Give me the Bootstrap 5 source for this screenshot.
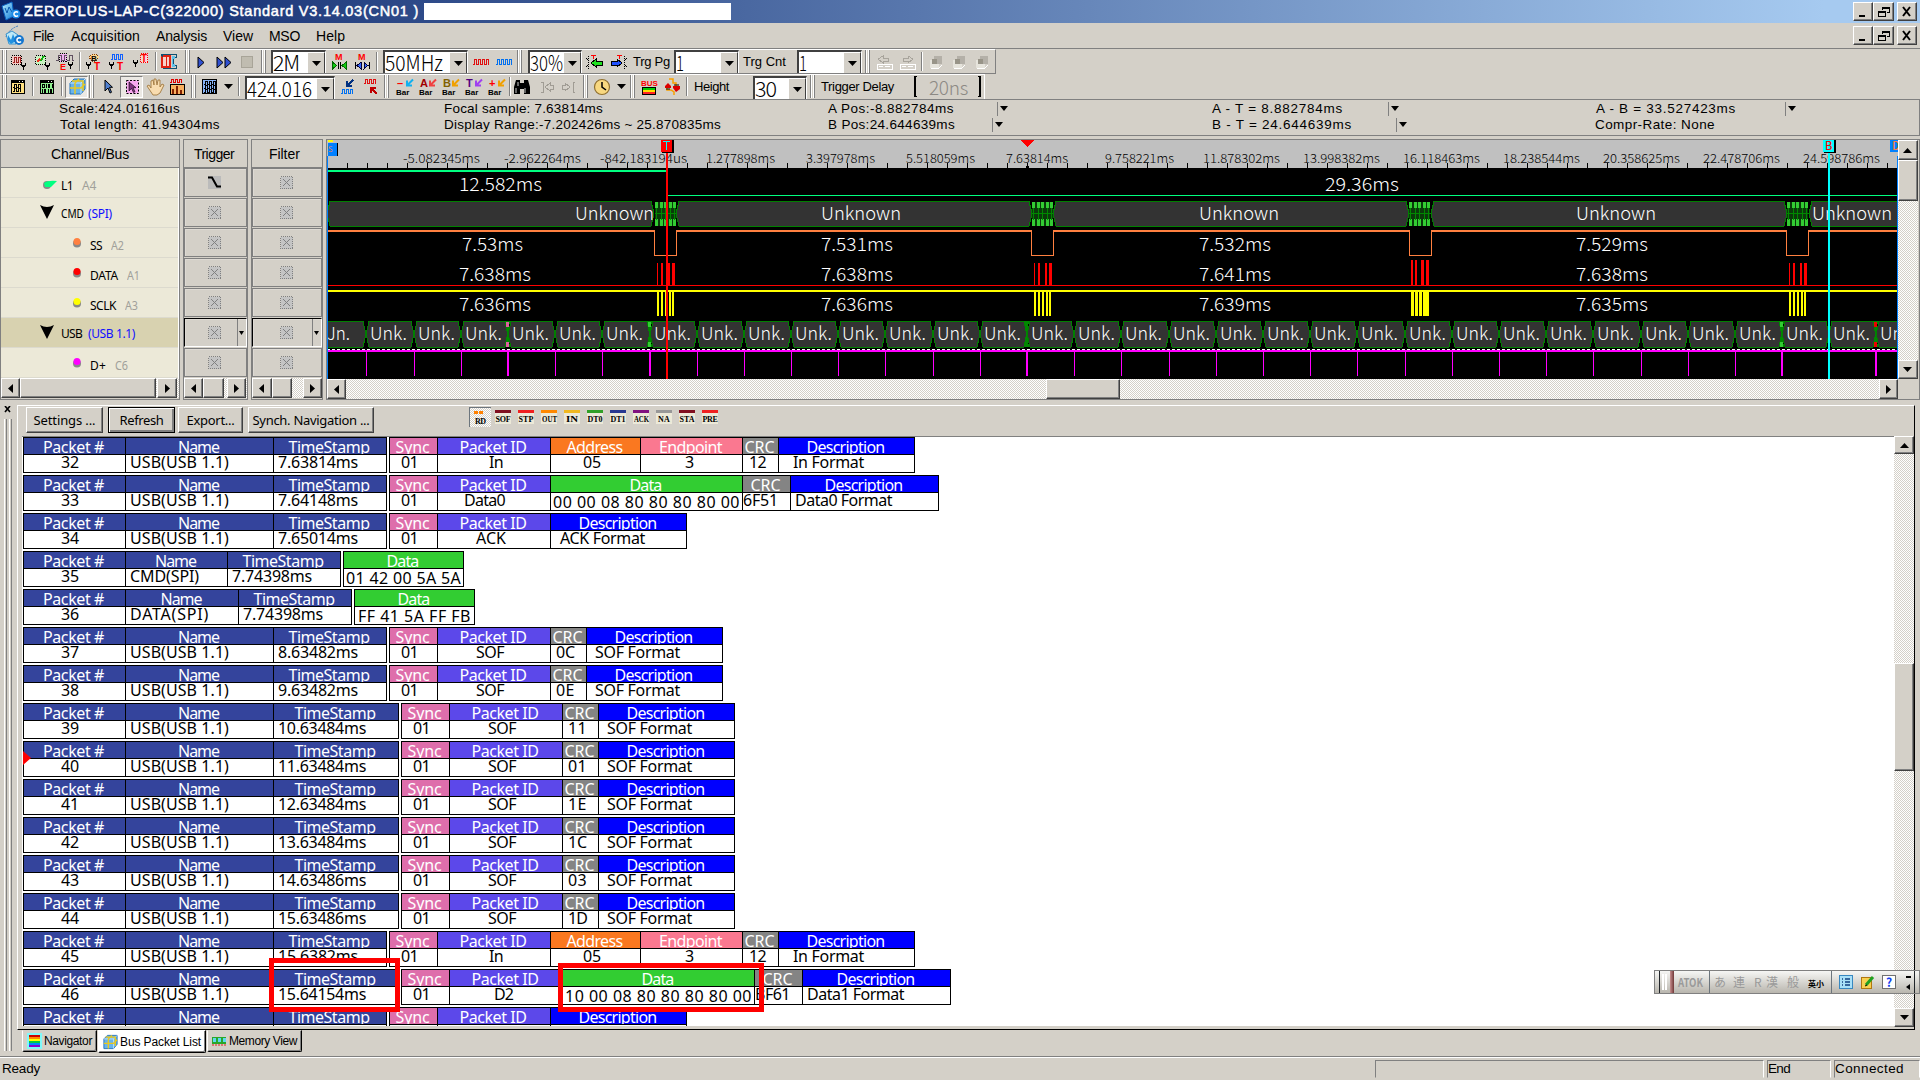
<!DOCTYPE html>
<html lang="en">
<head>
<meta charset="utf-8">
<title>ZEROPLUS-LAP-C(322000) Standard</title>
<link href="https://cdn.jsdelivr.net/npm/bootstrap@5.3.0/dist/css/bootstrap.min.css" rel="stylesheet">
<style>
:root{--face:#d4d0c8;--sh:#808080}
body{width:1920px;height:1080px;overflow:hidden;background:var(--face);color:#000;font-family:"Liberation Sans","Noto Sans CJK JP",sans-serif;font-size:13px;line-height:1}
svg{display:block;flex:none}
.slot{flex:none;white-space:nowrap}
.ttl{height:23px;background:linear-gradient(90deg,#0a246a,#a6caf0 95%);color:#fff;font-size:14.5px;-webkit-text-stroke:.5px #fff}
.ttl .wbtn{-webkit-text-stroke:0}
.blank{height:17px;background:#fff}
.menub{height:26px;font-size:14px;border-bottom:1px solid var(--sh)}
.wbtn{height:19px;background:var(--face);border:1px solid;border-color:#fff #404040 #404040 #fff;box-shadow:inset -1px -1px var(--sh)}
.tb{height:25px}
.tb1{width:996px;border-top:1px solid #fff;border-bottom:1px solid var(--sh);border-right:1px solid var(--sh)}
.tb2{width:985px;border-top:1px solid #fff;border-right:1px solid #fff}
.tb2>.slot{margin-top:-1px}
.grip{height:23px;background:linear-gradient(90deg,var(--sh) 0 1px,#fff 1px 2px,var(--face) 2px 3px,#fff 3px 4px,var(--sh) 4px 5px,transparent 5px)}
.tsep{height:19px;background:linear-gradient(90deg,var(--sh) 50%,#fff 50%)}
.combo{height:23px;background:#fff;border:2px solid #404040;border-right:1px solid #fff;border-bottom:0;overflow:hidden;align-self:flex-end}
.combo .dd{width:18px;height:22px;background:var(--face);border:1px solid;border-color:#fff #404040 #404040 #fff}
.combo .big{font-size:21.500px;line-height:20px;white-space:nowrap}
.big{font-family:"Noto Sans CJK JP","Liberation Sans",sans-serif;font-weight:300}
.delay{font-size:19px;color:#8c8984}
.pressed{background:#ece9e4;border:1px solid;border-color:var(--sh) #fff #fff var(--sh);height:22px}
.info{height:37px;border:1px solid var(--sh);font-size:13.5px}
.info .line{height:17px}
.info .line+.line{height:16px}
.tick{height:14px;border-left:1px solid var(--sh)}
.pane{border:1px solid var(--sh)}
.phead{height:28px;border-bottom:1px solid var(--sh);font-size:14px}
.chrow{height:30px;background:#ece9d8;border-bottom:1px solid #dcdace;font:12px/1 "Noto Sans",sans-serif}
.chrow.sel{background:#d8d2b0}
.chrow .hw{color:#a0a09a}
.chrow .bus{color:#1010ff}
.cellb{height:29px;margin-bottom:1px;border:1px solid var(--sh);box-shadow:inset 1px 1px #dedad4}
.cellb.sunk{border-color:#000 #fff #fff #000}
.sb{height:20px;background:repeating-conic-gradient(#fff 0 25%,var(--face) 0 50%) 0 0/2px 2px}
.sbb{background:var(--face);border:1px solid;border-color:#fff #404040 #404040 #fff;box-shadow:inset -1px -1px var(--sh);flex:none}
.vsb{width:20px;background:repeating-conic-gradient(#fff 0 25%,var(--face) 0 50%) 0 0/2px 2px}
.lower{height:656px}
.dock{border-left:1px solid #fff;border-top:1px solid #fff;border-right:1px solid #000;border-bottom:1px solid #000;height:625px;width:1898px}
.pbtn{height:26px;border:1px solid;border-color:#fff #404040 #404040 #fff;box-shadow:inset -1px -1px var(--sh);font:13px/1 "Noto Sans",sans-serif}
.pbtn.def{border:1px solid #000;box-shadow:inset 1px 1px #fff,inset -2px -2px var(--sh)}
.pico{height:14px;background:#ece9d8;font:bold 8px/8px "Liberation Serif",serif;border-top:3px solid;margin-top:3px}
.plist{background:#fff;height:590px;width:1872px;overflow:hidden;font:16px/16px "Noto Sans",sans-serif;border-top:1px solid var(--sh)}
.rec{height:38px;padding-left:1px}
.grp{height:36px;border:1px solid #000;border-right:0;margin-right:2px}
.pc{border-right:1px solid #000;height:34px}
.ph{height:17px;border-bottom:1px solid #000;color:#fff;overflow:hidden;line-height:19px;padding-right:2px}
.pv{height:17px;line-height:15px;white-space:nowrap}
.pv.low{line-height:19px}
.fitw{display:inline-block;white-space:pre;transform-origin:0 50%}
.redbox{position:absolute;border:5px solid #f00}
.ttab{border:1px solid;border-color:var(--face) #000 #000 #fff;box-shadow:inset -1px -1px var(--sh);height:22px;border-radius:0 0 2px 2px;font-size:12px}
.ttab.on{background:#fff;height:23px;border-color:#fff #000 #000 #fff}
.stat{height:24px;border-top:1px solid var(--sh);box-shadow:inset 0 1px #fff;font-size:13.5px}
.sp{height:18px;border:1px solid;border-color:var(--sh) #fff var(--face) var(--sh)}
.ime{position:absolute;left:1654px;top:970px;width:266px;height:24px;border:1px solid var(--sh);background:linear-gradient(#f6f6f4,#b9b6ae);font:12px/1 "Noto Sans CJK JP",sans-serif;color:#9a9a9a}
</style>
<script src="https://cdn.jsdelivr.net/npm/bootstrap@5.3.0/dist/js/bootstrap.bundle.min.js"></script>
</head>
<body>
<div class="d-flex flex-column position-relative">
  <header class="ttl d-flex align-items-center" id="ttl"></header>
  <nav class="menub d-flex align-items-center" id="menub"></nav>
  <div class="tb tb1 d-flex align-items-center" id="tb1"></div>
  <div class="tb tb2 d-flex align-items-center" id="tb2"></div>
  <section class="info">
    <div class="line d-flex align-items-center" id="inf1"></div>
    <div class="line d-flex align-items-center" id="inf2"></div>
  </section>
  <main class="d-flex" style="margin-top:3px">
    <div class="pane" style="width:180px">
      <div class="phead d-flex align-items-center" id="h1"></div>
      <div class="d-flex"><div style="width:177px" id="chs"></div><div class="bg-white" style="width:1px"></div></div>
      <div class="sb d-flex" id="sb1"></div>
    </div>
    <div class="pane" style="width:65px;margin-left:3px">
      <div class="phead d-flex align-items-center" id="h2"></div><div id="trg"></div><div class="sb d-flex" id="sb2"></div>
    </div>
    <div class="pane" style="width:72px;margin-left:3px">
      <div class="phead d-flex align-items-center" id="h3"></div><div id="flt"></div><div class="sb d-flex" id="sb3"></div>
    </div>
    <div class="pane d-flex" style="width:1597px;margin-left:3px">
      <div><div id="wave"></div><div class="sb d-flex" id="sb4" style="width:1571px"></div></div>
      <div class="vsb d-flex flex-column" style="height:239px" id="vs1"></div>
    </div>
  </main>
  <section class="lower d-flex">
    <div style="width:17px;padding:6px 0 0 4px">
      <svg width="8" height="646"><path d="M1 0l5 6M6 0l-5 6" stroke="#000" stroke-width="1.6"/><path d="M.5 13v632M5.500 13v632" stroke="#fff"/><path d="M2.500 13v632M7.500 13v632" stroke="#808080"/></svg>
    </div>
    <div>
      <div class="dock" style="margin-top:5px">
        <div class="d-flex align-items-start" style="height:30px;padding-top:1px" id="pbar"></div>
        <div class="d-flex" style="padding-left:4px">
          <div class="plist" id="plist"></div>
          <div class="vsb d-flex flex-column" style="height:591px" id="vs2"></div>
        </div>
      </div>
      <div class="d-flex align-items-start" id="tabs"></div>
    </div>
  </section>
  <footer class="stat d-flex align-items-center" id="stat"></footer>
  <div class="redbox" style="left:269px;top:958px;width:131px;height:54px"></div>
  <div class="redbox" style="left:558px;top:963px;width:206px;height:49px"></div>
  <div class="ime d-flex align-items-center" id="ime"></div>
</div>
<script>
const $=id=>document.getElementById(id);
// text that is spaced out to an exact pixel width
const F=(t,w,c='')=>`<span class="fitw ${c}" data-w="${w}">${t}</span>`;
// a run of [x, width, html, class] slots laid left to right
const run=(id,items,x0=0)=>{let c=x0;$(id).innerHTML=items.map(([x,w,h,k=''])=>{const m=x-c;c=x+w;return `<div class="slot ${k}" style="margin-left:${m}px;width:${w}px">${h}</div>`}).join('')};
const T=(x,w,t,c)=>[x,w,F(t,w,c)];
const S=(w,h,b)=>`<svg width="${w}" height="${h}" shape-rendering="crispEdges">${b}</svg>`;
const A=(w,h,b)=>`<svg width="${w}" height="${h}">${b}</svg>`;
const P=(d,s='#000',w=1,f='none')=>`<path d="${d}" stroke="${s}" stroke-width="${w}" fill="${f}"/>`;
const tri={d:'<svg width="9" height="5"><path d="M0 0h9l-4.500 5z"/></svg>',u:'<svg width="9" height="5"><path d="M0 5h9l-4.500-5z"/></svg>',l:'<svg width="5" height="9"><path d="M5 0v9l-5-4.500z"/></svg>',r:'<svg width="5" height="9"><path d="M0 0v9l5-4.500z"/></svg>'};
const C='d-flex align-items-center justify-content-center ';
const wb=[S(10,12,P('M1 10h6','#000',2)),S(12,12,P('M4.500 4V1.500h7v5H9M4 2h8','#000')+P('M.5 5.500h7v5h-7zM0 6h8','#000')),A(10,12,P('M1 1l7 9M8 1l-7 9','#000',2))];
const wins=[[1853,20,wb[0],'wbtn '+C],[1873,21,wb[1],'wbtn '+C],[1897,20,wb[2],'wbtn '+C]];
const logo=A(21,21,'<defs><linearGradient id="lg" x2="1" y2="1"><stop stop-color="#bdf0ff"/><stop offset="1" stop-color="#0878d8"/></linearGradient></defs><path d="M1 5l10-4 2 14-8 4z" fill="url(#lg)" stroke="#0a60c0"/><path d="M4 7l2 5 2-6 3 5" stroke="#0858b0" fill="none"/><circle cx="15" cy="13" r="4.500" fill="#1c8ce8"/><path d="M17 11.500a2.300 2.300 0 1 0 0 3" stroke="#fff" stroke-width="1.500" fill="none"/>');
const logo2=A(21,21,'<path d="M2 12Q5 4 14 1" stroke="#3878c0" fill="none" stroke-dasharray="2 1"/><path d="M2 9L8 6l6 4-2 9H5z" fill="#bfe9f6" stroke="#1880c8" stroke-width=".8"/><path d="M4 10l3 5 2-6 3 7-5 3-3-3z" fill="#2090e0"/><circle cx="15" cy="15" r="5" fill="#1677cf"/><path d="M17 13.500a2.300 2.300 0 1 0 0 3" stroke="#fff" stroke-width="1.500" fill="none"/>');
run('ttl',[[1,21,logo],T(24,395,'ZEROPLUS-LAP-C(322000) Standard V3.14.03(CN01 )'),[424,307,'','blank'],...wins]);
run('menub',[[4,21,logo2],T(33,21,'File'),T(71,69,'Acquisition'),T(156,51,'Analysis'),T(223,30,'View'),T(269,31,'MSO'),T(316,29,'Help'),...wins]);

// toolbar icons, 20 x 18 each
const fork=(x,y)=>P(`M${x+.5} ${y}v2.500h4v-2.500M${x+2.500} ${y+2}v5`,'#000',1)+P(`M${x+1} ${y+2.500}h3`,'#000',2);
const wv=(x,y,c,n=3,h=5)=>{let d=`M${x} ${y+h+.5}`;for(let i=0;i<n;i++)d+='h1.500v-'+h+'h2v'+h+'h.5';return P(d,c)};
const tx=(x,y,t,c,s=8)=>`<text x="${x}" y="${y}" font-family="Liberation Sans" font-weight="bold" font-size="${s}" fill="${c}">${t}</text>`;
const I=b=>S(20,18,b);
const dash=(c,f)=>`<rect x="3.500" y="2.500" width="10" height="9" fill="${f}" stroke="${c}" stroke-dasharray="1 1"/>`;
const ic={
 a1:I(dash('#000','#f4c8c0')+wv(5,4,'#a02020',2)+fork(13,10)),
 a2:I(dash('#000','#c8f4c0')+P('M5 9l2-2h2l3-4','#10b010',2)+P('M5 9l3-3','#f03020',2)+fork(13,10)),
 a3:I('<rect x="4.500" y=".5" width="7" height="8" fill="#f0b0f0" stroke="#000" stroke-dasharray="1 1"/>'+P('M1 7h2v-5h3v5h3v-5h3M12 7h2v-5h3v5h2','#605060')+tx(5,17,'E','#f00',9)+fork(13,9)),
 a4:I('<path d="M5 4l3-3h4l3 3-3 4H8z" fill="#ffd890" stroke="#804010" stroke-dasharray="1 1"/>'+tx(7,8,'B','#000',8)+fork(2,9)+tx(10,17,'T','#f00',10)),
 a5:I(wv(4,1,'#1060ff',3)+fork(2,9)+tx(10,17,'T','#f00',10)),
 a6:I('<rect x="10.500" y=".5" width="7" height="9" fill="#f8d8d8" stroke="#f00" stroke-dasharray="1 1"/>'+tx(11,9,'T','#f00',10)+fork(3,7)),
 a7:I('<rect x="3" y="3" width="8" height="11" fill="#f8d0c8" stroke="#e02010" stroke-width="2"/><path d="M2 1.500h15v3h-3v8h3v3H4M2 1.500l2 2" fill="none" stroke="#105070"/><path d="M13 3h3v3h-2v5h2v3h-3z" fill="#60c0e8"/>'+P('M7 4v9','#e02010')),
 play:A(20,18,P('M7 4v11l6-5.500z','#000',1,'#3050d0')),
 ff:A(20,18,P('M3 4v11l6-5.500zM11 4v11l6-5.500z','#000',1,'#3050d0')),
 stop:I('<rect x="4.500" y="3.500" width="11" height="11" fill="#c0bcb0" stroke="#a8a498"/>'),
 m1:I(tx(6,7,'M','#f00',9)+P('M3.500 9v7l4-3.500z','#060',1,'#1c1')+P('M17 9v7l-4-3.500z','#060',1,'#1c1')+P('M9.500 9v7M11.500 9v7')),
 m2:I(tx(6,7,'M','#f00',9)+P('M3.500 9v7M17.500 9v7')+P('M9 9.500v6l-4-3zM12 9.500v6l4-3z','#003',1,'#36f')),
 rw:I(wv(2,6,'#e01010',4,5)),bw:I(wv(2,6,'#0070f0',4,5)),
 gl:I('<path d="M3.500 3v14" stroke="#000" stroke-dasharray="1 1"/>'+P('M1 5l2 2M1 14l2-2')+'<path d="M6 10l5-4v2h6v4h-6v2z" fill="#20e020" stroke="#000"/>'+P('M6 2.500h5M8.500 2v4','#f00')),
 br:I('<path d="M16.500 3v14" stroke="#000" stroke-dasharray="1 1"/>'+P('M19 5l-2 2M19 14l-2-2')+'<path d="M14 10l-5-4v2H3v4h6v2z" fill="#2050ff" stroke="#000"/>'+P('M9 2.500h5M11.500 2v4','#f00')),
 dl:I(P('M4 6l5-3v2h5v3H9v2z','#a8a49c')+P('M3 11h15v5H3zM5 13.500h4M11 13.500h5','#fff')),
 dr:I(P('M16 6l-5-3v2H6v3h5v2z','#a8a49c')+P('M3 11h15v5H3zM5 13.500h4M11 13.500h5','#fff')),
 dg:I('<path d="M4 7h9v8H4z" fill="#e6e4dc"/><path d="M8 3h8v8H8z" fill="#b4b0a8"/><path d="M6 6h5v5H6z" fill="#989488"/>'+P('M5 15h8l3-3','#fff')),
 w1:I('<rect x="3.500" y="2.500" width="13" height="13" fill="#ffe080" stroke="#000"/><path d="M3 2h14v3H3z"/>'+P('M11 3.500h1M14 3.500h1','#fff')+wv(5,6,'#000',2,3)+wv(5,10,'#000',2,3)),
 w2:I('<rect x="3.500" y="2.500" width="13" height="13" fill="#90f090" stroke="#000"/><path d="M3 2h14v3H3z"/>'+P('M11 3.500h1M14 3.500h1','#fff')+'<path d="M5.500 6.500h2v3h-2zM9.500 6v4M11.500 6.500h1v3h-1zM15 6v4M5.500 11v4M7.500 11.500h1v3h-1zM11.500 11v4M13.500 11.500h1v3h-1z" fill="none" stroke="#000"/>'),
 cube:A(20,20,'<path d="M3 6l4-4h11v10l-4 5H3z" fill="#68b4ec" stroke="#2070b8"/><path d="M3 6h11v11M14 6l4-4" fill="none" stroke="#bfe4ff"/><path d="M8 6v11M3 11h11l4-4M8 6l4-4M5 4h11v10" fill="none" stroke="#e8c820" stroke-width="1.500"/>'),
 cur:A(20,18,'<path d="M7 2v11l3-3 2 5 1.500-.7-2-5h3z" fill="#5080d0" stroke="#000"/>'),
 sel:A(20,18,'<rect x="4.500" y="2.500" width="12" height="13" fill="#f8a8f0" stroke="#000" stroke-dasharray="2 1.500"/><path d="M7 4v9l2.500-2.500 2 4 1.500-.8-2-4h3z" fill="#803080" stroke="#000" stroke-width=".6"/>'),
 hand:A(20,18,'<path d="M2 8l2-1 2 3V3l2-1 1 5V1h2l1 6 1-5h2v7l2-3 2 1-4 8-3 2H8z" fill="#f8dcb0" stroke="#a07840" stroke-width=".9"/>'),
 chart:I(wv(3,1,'#e00000',3,3)+'<rect x="3.500" y="6.500" width="14" height="10" fill="#f8b060" stroke="#000"/><path d="M5 11h2v5H5zM9 8h2v8H9zM13 12h2v4h-2z" fill="#802000"/>'),
 wb:I('<rect x="3.500" y="1.500" width="14" height="14" fill="#88b4f8" stroke="#000"/>'+wv(5,3,'#000',3,3)+wv(5,7,'#000',3,3)+wv(5,11,'#000',3,3)),
 k1:I(wv(3,11,'#0070f0',3,4)+P('M15 2l-5 5M8.500 3v5h5','#003080',2)),
 k2:I(wv(3,1,'#e01010',3,4)+P('M16 16l-5-5M9.500 15v-5h5','#c00000',2)),
 binoc:A(20,18,'<path d="M4 2h4v3h4V2h4l2 7v7h-6v-5H8v5H2V9z"/><path d="M4 10v5M13 10v5M6 4v4" stroke="#fff" stroke-width=".8"/>'),
 nl:I(P('M4 4h2v10H4M16 7h-3V5l-5 4 5 4v-2h3z','#a09c94')),nr:I(P('M16 4h-2v10h2M3 7h3V5l5 4-5 4v-2H3z','#a09c94')),
 clock:A(20,18,'<circle cx="10" cy="9" r="7.500" fill="#f8d880" stroke="#907030" stroke-width="1.200"/><path d="M10 4v5l4 3" fill="none" stroke="#000" stroke-width="1.500"/>'),
 bus:I(tx(2,8,'BUS','#f00',8)+P('M3 9.500h14M3 16.500h14M3.500 9v8M16.500 9v8','#000')+P('M4 11h12','#0c0',2)+P('M4 13h12','#fd0',2)+P('M4 15h12','#f22',2)),
 dots:A(20,18,P('M7 1h4v4h3v4M5 8v4h4l3 2v3','#f8a000',1.500)+'<path d="M3 8l3-3 3 3v2H3zM11 10l3 4 4-3V8h-7z" fill="#d00"/><path d="M4 11h4M12 7h5" stroke="#000"/>')
};
const bar=(t,c,a)=>A(22,18,tx(3,9,t,c,11)+P('M19 1.500l-5 5M13 2.500v5h5',a,2)+tx(2,17,'Bar','#000',8));
const i=(c,k)=>[c-10,20,ic[k]];
const pr=(c,k)=>[c-12,23,ic[k],'pressed '+C];
const G=x=>[x,6,'','grip'],Z=x=>[x,2,'','tsep'];
const cb=(x,w,t,tw)=>[x,w,`<div class="d-flex"><div class="flex-grow-1" style="width:10px">${F(t,tw,'big')}</div><div class="dd ${C}">${tri.d}</div></div>`,'combo'];
run('tb1',[G(2),i(18,'a1'),i(42,'a2'),i(65,'a3'),Z(79),i(94,'a4'),i(117,'a5'),i(140,'a6'),Z(155),i(169,'a7'),G(185),i(201,'play'),i(224,'ff'),i(247,'stop'),G(261),cb(271,55,'2M',26),i(339,'m1'),i(362,'m2'),Z(376),cb(383,85,'50MHz',58),i(481,'rw'),i(504,'bw'),G(517),cb(528,54,'30%',33),i(595,'gl'),i(618,'br'),T(633,37,'Trg Pg'),cb(674,65,'1',8),T(743,43,'Trg Cnt'),cb(797,65,'1',8),G(865),i(884,'dl'),i(907,'dr'),Z(921),i(936,'dg'),i(959,'dg'),i(982,'dg')]);
run('tb2',[G(2),i(18,'w1'),Z(32),i(47,'w2'),Z(61),pr(77,'cube'),G(89),i(108,'cur'),pr(132,'sel'),i(155,'hand'),i(177,'chart'),G(191),i(209,'wb'),[224,9,tri.d],Z(238),cb(245,90,'424.016',65),i(348,'k1'),i(371,'k2'),G(384),[394,22,bar('–','#f00','#10b0f0')],[417,22,bar('A','#a00000','#f04040')],[440,22,bar('B','#806000','#f0a000')],[463,22,bar('T','#500080','#a040f0')],[486,22,bar('+','#f00','#f0a000')],Z(509),i(522,'binoc'),i(547,'nl'),i(569,'nr'),G(583),i(602,'clock'),[617,9,tri.d],G(630),i(649,'bus'),i(672,'dots'),Z(686),T(694,35,'Height'),cb(753,54,'30',21),G(810),T(821,73,'Trigger Delay'),[914,5,S(5,21,P('M3 .5h-2v20h2','#000',1.500))],[929,40,F('20ns',39,'big delay')],[977,5,S(5,21,P('M1 .5h2v20h-2','#000',1.500))]]);

const dn='<svg width="8" height="5"><path d="M0 0h8l-4 5z"/></svg>',tk=x=>[x,12,`<div style="padding:4px 0 0 2px">${dn}</div>`,'tick'];
run('inf1',[T(59,121,'Scale:424.01616us'),T(444,159,'Focal sample: 7.63814ms'),T(828,126,'A Pos:-8.882784ms'),tk(997),T(1212,131,'A - T = 8.882784ms'),tk(1388),T(1596,140,'A - B = 33.527423ms'),tk(1785)],1);
run('inf2',[T(60,160,'Total length: 41.94304ms'),T(444,277,'Display Range:-7.202426ms ~ 25.870835ms'),T(828,127,'B Pos:24.644639ms'),tk(992),T(1212,140,'B - T = 24.644639ms'),tk(1396),T(1595,120,'Compr-Rate: None')],1);

run('h1',[T(51,78,'Channel/Bus')],1);run('h2',[T(194,40,'Trigger')],184);run('h3',[T(269,31,'Filter')],252);
// channel tree
const dot=c=>A(10,12,`<circle cx="5" cy="6.500" r="4" fill="#888"/><circle cx="5" cy="4.500" r="3.500" fill="${c}"/>`);
const tree=A(14,15,'<path d="M0 0q7 4 14 0L7 14z"/>');
const chs=[[[43,14,A(14,10,'<circle cx="4" cy="5" r="4" fill="#888"/><path d="M1 3q4-3 13-2L8 7H2z" fill="#00ff80"/>')],T(61,12,'L1'),T(82,14,'A4','hw')],
[[40,14,tree],T(61,23,'CMD'),T(88,24,'(SPI)','bus')],
...[['#ff8040','SS',12,'A2',111],['#f00','DATA',28,'A1',127],['#ff0','SCLK',26,'A3',125]].map(a=>[[72,10,dot(a[0])],T(90,a[2],a[1]),T(a[4],13,a[3],'hw')]),
[[40,14,tree],T(61,21,'USB'),T(88,47,'(USB 1.1)','bus')],
[[72,10,dot('#f0f')],T(90,16,'D+'),T(115,13,'C6','hw')]];
$('chs').innerHTML=chs.map((_,n)=>`<div class="chrow d-flex align-items-center ${n==5?'sel':''}" style="padding-top:${[7,3,7,7,7,2,7][n]}px" id="c${n}"></div>`).join('');
chs.forEach((c,n)=>run('c'+n,c,1));
document.querySelectorAll('.chrow svg').forEach((e,n)=>e.style.marginTop=[2,3,4,5,6].includes(n)&&n!=5?'-6px':'-3px');
const cx=S(13,13,'<rect x=".5" y=".5" width="12" height="12" fill="#c4c4c4" stroke="#808080" stroke-dasharray="1 1"/>'+P('M3 3l7 7M10 3l-7 7','#808080')),edge=A(13,13,'<rect width="13" height="13" fill="#bbb"/>'+P('M0 1.500h4l5 9h4','#000',2));
const cells=(id,f,pad)=>$(id).innerHTML=[0,1,2,3,4,5,6].map(n=>`<div class="cellb d-flex align-items-center ${n==5?'sunk':''}"><div style="margin-left:${pad}px">${n?cx:f}</div>${n==5?`<div class="ms-auto h-100 ${C}" style="width:9px;border-left:1px solid #808080"><svg width="5" height="4"><path d="M0 0h5l-2.500 4z"/></svg></div>`:''}</div>`).join('');
cells('trg',edge,23);cells('flt',cx,27);
const B=(x,w,t)=>[x,w,tri[t]||'','sbb '+C];
run('sb1',[B(1,19,'l'),B(20,136),B(157,20,'r')],1);run('sb2',[B(184,19,'l'),B(203,21),B(227,19,'r')],184);run('sb3',[B(252,20,'l'),B(272,20),B(303,19,'r')],252);run('sb4',[B(327,19,'l'),B(1046,74),B(1879,19,'r')],327);
const V=(h,t,m=0)=>`<div class="sbb ${C}" style="height:${h}px;margin-top:${m}px">${tri[t]||''}</div>`;
$('vs1').innerHTML=V(20,'u')+V(41)+V(19,'d',159);$('vs2').innerHTML=V(18,'u')+V(108,'',209)+V(19,'d',237);

// waveform, drawn in screen coordinates
let w='<rect x="327" y="140" width="1571" height="28" fill="#c0c0c0"/><rect x="327" y="168" width="1571" height="211"/>';
const R=(x,y,a,b,c)=>w+=`<rect x="${x}" y="${y}" width="${a}" height="${b}" fill="${c}"/>`;
const L=(x,y,t,tw,s=18,c='#fff')=>w+=`<text x="${x-1}" y="${y}" font-size="${s}" fill="${c}" textLength="${tw}" lengthAdjust="spacingAndGlyphs">${t}</text>`;
for(let x=327;x<1898;x+=20)R(x,163,1,5,'#000');
['-5.082345ms','-2.962264ms','-842.183194us','1.277898ms','3.397978ms','5.518059ms','7.63814ms','9.758221ms','11.878302ms','13.998382ms','16.118463ms','18.238544ms','20.358625ms','22.478706ms','24.598786ms'].forEach((t,k)=>{const tw=k==2?87:k<2?77:k==6?62:k<8?69:77;L([404,505,601,707,807,907,1007][k]||(k==7?1106:1204+(k-8)*100),163,t,tw,12.5,'#000')});
R(1026,166,3,3,'#000');
const hex=(a,b,y,h,f='#333')=>w+=`<path d="M${a+3} ${y+.5}H${b-3}L${b} ${y+h/2}L${b-3} ${y+h}H${a+3}L${a} ${y+h/2}z" fill="${f}" stroke="#008000"/>`;
R(327,170,340,2,'#00ff80');R(667,195,1231,1,'#00ff80');L(460,191,'12.582ms',83);L(1326,191,'29.36ms',74);
[[327,654],[676,1032],[1053,1409],[1431,1787],[1809,1905]].forEach(a=>hex(a[0],a[1],201,25));
[655,1032,1409,1787].forEach(x=>{R(x,202,21,24,'#0a3a0a');for(let k=0;k<5;k++){R(x+k*4.500,202,3,6,'#3c3');R(x+k*4.500,219,3,7,'#3c3');R(x+k*4.500+1,208,1,12,'#080')}R(x,213,21,1,'#080')});
[[576,79],[822,80],[1200,80],[1577,80],[1813,80]].forEach(a=>L(a[0],220,'Unknown',a[1]));
w+='<path d="M654.500 231V255.500H676.500V231M1031.500 231V255.500H1053.500V231M1409.500 231V255.500H1431.500V231M1786.500 231V255.500H1808.500V231" fill="none" stroke="#ff8040"/>';
[[327,328],[676,356],[1053,357],[1431,356],[1808,90]].forEach(a=>R(a[0],230,a[1],2,'#ff8040'));
[['7.53ms','7.638ms','7.636ms',463],['7.531ms','7.638ms','7.636ms',822],['7.532ms','7.641ms','7.639ms',1200],['7.529ms','7.638ms','7.635ms',1577]].forEach((a,k)=>{L(a[3],251,a[0],k?72:61);L(k?a[3]:460,281,a[1],72);L(k?a[3]:460,311,a[2],72)});
R(327,285,1571,1,'#f00');R(327,290,1571,2,'#ff0');
[[657,0],[1034,0],[1411,1],[1789,0]].forEach(([x,f])=>{[[0,1+f],[4,2],[11-f,2+f],[15,3]].forEach(a=>R(x+a[0],f?260:263,a[1],f?25:22,'#f00'));[0,4,8,12,15].forEach(a=>R(x+a,291,f?3:2,25,'#ff0'))});
const bd=[];for(let k=0;k<33;k++)bd.push(Math.round(366.4+47.19*k));
[319,...bd].forEach((x,k)=>hex(x,bd[k]||1925,321,26));
bd.forEach((x,k)=>{const s={3:'#e060a0',6:'#3c3',14:'#080',30:'#3c3',32:'#e00'}[k];if(s){w+=`<path d="M${x-3} 321h5l-2 13 2 13h-5l2-13z" fill="#080"/>`;R(x-2,322,3,5,s);R(x-2,342,3,5,s)}R(x-(s?1:0),352,s?2:1,24,'#f0f');if(k<32)L(x+5,340,'Unk.',37)});
L(328,340,'Jn.',23);L(1881,340,'Unk.',37);
R(327,350,1571,2,'#f0f');w+='<path d="M327 349.500H1898" stroke="#fff" stroke-dasharray="3 2"/>';
R(666,152,2,227,'#f00');R(1828,152,2,227,'#0ff');R(327,156,1,223,'#0080ff');R(1897,156,1,223,'#0080ff');
R(662,140,12,13,'#000');R(661,140,11,12,'#f00');w+=P('M663 141h7M666.500 141v9','#0ff');w+=P('M1021 140h13l-6.500 7z','none',0,'#f00');
R(1824,140,12,13,'#000');R(1823,140,11,12,'#0ff');w+='<text x="1825" y="150" font-size="11" font-weight="500" fill="#f00">B</text>';
R(328,143,9,13,'#0080ff');R(337,143,1,13,'#000');R(328,140,5,2,'#ff0');w+='<text x="328" y="152" font-size="10" fill="#ff8040">s</text>';
R(1890,140,8,12,'#0080ff');w+='<text x="1892" y="150" font-size="11" font-weight="500" fill="#ff8040">D</text>';
$('wave').innerHTML=`<svg viewBox="327 140 1571 239" width="1571" height="239" shape-rendering="crispEdges" class="big">${w}</svg>`;

// packet panel tool strip
const pb=(x,w,t,tw,d='')=>[x,w,F(t,tw),'pbtn '+C+d];
run('pbar',[pb(26,77,'Settings ...',62),pb(108,67,'Refresh',44,'def'),pb(178,65,'Export...',48),pb(248,126,'Synch. Navigation ...',117),
[469,22,`<div style="height:14px;margin:2px 0 0 3px">${S(16,14,'<path d="M1 1h4v3H1zM6 1h4v3H6z" fill="#ff8000"/><text x="2" y="14" font-family="Liberation Serif" font-weight="bold" font-size="8" textLength="11">RD</text>')}</div>`,'sb border-top border-start border-secondary'],
...[['SOF','#800f20'],['STP','#f02020'],['OUT','#f80'],['IN','#f0b820'],['DT0','#30a028'],['DT1','#283890'],['ACK','#801080'],['NA','#989898'],['STA','#800f20'],['PRE','#f02020']].map(([t,c],k)=>[495+k*23,16,`<div class="text-center" style="padding-top:3px">${F(t,t.length>2?15:12,'text-black')}</div>`,'pico c'+c.slice(1)])],18);
document.querySelectorAll('.pico').forEach(e=>{e.style.borderColor='#'+e.className.split(' c').pop()});

const HW={'Packet #':61,Name:41,TimeStamp:81,Sync:34,'Packet ID':67,Data:32,CRC:30,Address:56,Endpoint:63,Description:78};
const HC={Sync:'#de6eab','Packet ID':'#5c48ea',Data:'#32cd32',CRC:'#848484',Address:'#fa7820',Endpoint:'#fa7890',Description:'#00f'};
const cell=([w,h,v,l,vw])=>`<div class="pc" style="width:${w}px"><div class="ph text-center" style="background:${HC[h]||'#34449c'}">${F(h,HW[h])}</div><div class="pv ${h=='Data'?'low':''}" style="padding-left:${l-1}px">${F(v,vw)}</div></div>`;
const grp=c=>`<div class="grp d-flex">${c.map(cell).join('')}</div>`;
const rec=(n,nm,nw,tw,ts,rest)=>`<div class="rec d-flex">${grp([[102,'Packet #',''+n,38,18],[nw,'Name',nm,5,nm[0]=='U'?99:nm[0]=='C'?69:79],[tw,'TimeStamp',ts,5,ts.length*9-(ts.length>9?2:1)]])}${grp(rest)}</div>`;
const sy=[48,'Sync','01',12,17],pid=(t,l,w)=>[113,'Packet ID',t,l,w],byt=(t,w=187)=>[192,'Data',t,3,w];
const inn=[sy,pid('In',52,14),[90,'Address','05',33,18],[102,'Endpoint','3',45,9],[36,'CRC','12',7,17],[136,'Description','In Format',15,71]];
const ack=[sy,pid('ACK',39,30),[136,'Description','ACK Format',10,85]];
const sof=c=>[sy,pid('SOF',39,28),[36,'CRC',c,6,19],[136,'Description','SOF Format',9,85]];
const U='USB(USB 1.1)';
$('plist').innerHTML=[
 rec(32,U,148,113,'7.63814ms',inn),
 rec(33,U,148,113,'7.64148ms',[sy,pid('Data0',27,41),byt('00 00 08 80 80 80 80 00'),[48,'CRC','6F51',1,35],[148,'Description','Data0 Format',5,97]]),
 rec(34,U,148,113,'7.65014ms',ack),
 rec(35,'CMD(SPI)',102,113,'7.74398ms',[[120,'Data','01 42 00 5A 5A',3,115]]),
 rec(36,'DATA(SPI)',113,113,'7.74398ms',[[120,'Data','FF 41 5A FF FB',4,113]]),
 rec(37,U,148,113,'8.63482ms',sof('0C')),rec(38,U,148,113,'9.63482ms',sof('0E')),
 ...[['10.63484','11'],['11.63484','01'],['12.63484','1E'],['13.63484','1C'],['14.63486','03'],['15.63486','1D']].map((a,k)=>rec(39+k,U,148,125,a[0]+'ms',sof(a[1]))),
 rec(45,U,148,113,'15.6382ms',inn),
 rec(46,U,148,125,'15.64154ms',[sy,pid('D2',45,19),byt('10 00 08 80 80 80 80 00'),[48,'CRC','BF61',1,35],[148,'Description','Data1 Format',5,97]]),
 rec(47,U,148,113,'15.6482ms',ack)].join('');
// current-row pointer over the list edge
document.querySelectorAll('.rec')[8].insertAdjacentHTML('afterbegin','<svg class="position-absolute" style="margin:10px 0 0 0" width="8" height="14"><path d="M0 0v14l8-7z" fill="#f00"/></svg>');

const tab=(x,w,svg,t,tw,on='',g=2)=>[x,w,svg+`<div style="margin-left:${g}px">${F(t,tw)}</div>`,'ttab d-flex align-items-center ps-1 '+on];
run('tabs',[tab(22,75,A(15,16,'<rect width="15" height="16" fill="#80f8f8"/>'+['#c00','#f80','#ff0','#0c4','#08f','#80c'].map((c,k)=>`<rect x="2" y="${2+k*2}" width="11" height="2" fill="${c}"/>`).join('')),'Navigator',48),
tab(98,108,ic.cube.replace('<svg width="20" height="20"','<svg viewBox="2 1 17 17" width="15" height="16"'),'Bus Packet List',81,'on'),
tab(207,95,A(14,10,'<rect y="1" width="14" height="7" fill="#2aa82a"/><path d="M1 2h3v4H1zM6 2h3v4H6zM11 2h3v4h-3z" fill="#60d8f0"/><path d="M0 9h14" stroke="#e02020" stroke-dasharray="2 1"/>'),'Memory View',68,'',3)],17);
run('stat',[T(2,38,'Ready'),[1375,389,'','sp'],[1767,64,F('End',22),'sp d-flex align-items-center'],[1834,86,F('Connected',69),'sp d-flex align-items-center']]);
run('ime',[[1659,1,'','h-100 bg-dark'],[1662,5,'','my-1 h-75 border-start border-end border-2 border-white'],[1670,4,'<div style="height:22px;background:linear-gradient(90deg,#c89090,#703838)"></div>'],[1678,26,`<b>${F('ATOK',25)}</b>`],[1709,1,'','h-100 bg-secondary'],[1714,12,'あ'],[1733,12,'連'],[1754,9,'R'],[1766,12,'漢'],[1787,12,'般'],[1808,16,`<b class="text-black" style="font-size:8px">英小</b>`],[1831,1,'','h-100 bg-secondary'],
[1839,14,A(14,14,'<rect x=".5" y=".5" width="13" height="13" fill="#a8e0f8" stroke="#3888c0"/>'+P('M3 4h1M6 4h5M3 7h1M6 7h5M3 10h1M6 10h5','#104080',1.3))],
[1861,14,A(14,14,'<rect x=".5" y="2.500" width="10" height="11" fill="#f8d050" stroke="#b07810"/>'+P('M5 10l7-8','#20a020',3)+P('M4 11l2-1','#000'))],
[1882,14,A(14,14,'<rect x=".5" y=".5" width="13" height="13" fill="#fff" stroke="#707070"/><text x="4" y="11.500" font-size="12" font-weight="bold" fill="#1040f0">?</text>')],
[1906,6,A(6,18,P('M0 4h5','#000',2)+'<path d="M4 11v6l-4-3z"/>')],[1914,1,'','h-100 bg-dark']],1655);

document.querySelectorAll('.fitw').forEach(e=>{const n=e.textContent.length,w=+e.dataset.w,nat=e.getBoundingClientRect().width;if(!nat)return;const d=w-nat;
 if(d/nat<-.1||d/nat>.25){e.style.transform=`scaleX(${w/nat})`;e.style.marginRight=d+'px'}else{const s=d/n;e.style.letterSpacing=s+'px'}});
</script>
</body>
</html>
